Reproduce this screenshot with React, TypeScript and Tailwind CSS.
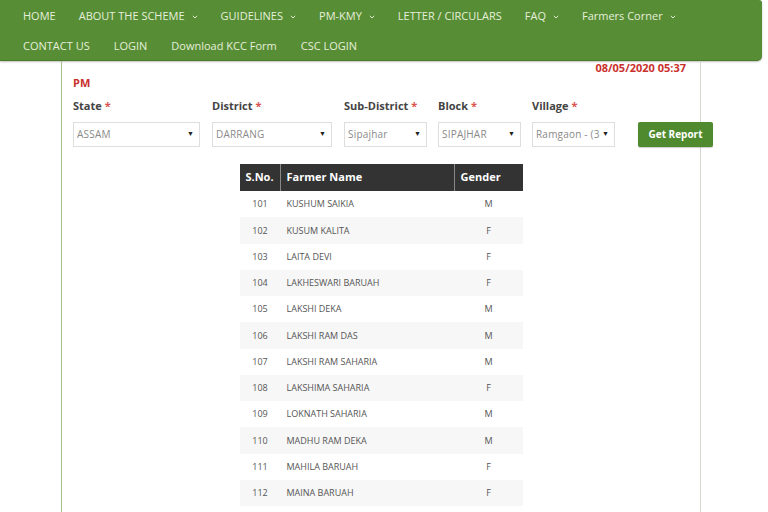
import React from "react";

const Chev = () => (
  <svg width="6" height="4" viewBox="0 0 6 4" className="ml-[7px] inline-block">
    <path d="M0.8 0.8 L3 3 L5.2 0.8" stroke="#dfe9d2" strokeWidth="1" fill="none" />
  </svg>
);

const row1: [string, boolean][] = [
  ["HOME", false],
  ["ABOUT THE SCHEME", true],
  ["GUIDELINES", true],
  ["PM-KMY", true],
  ["LETTER / CIRCULARS", false],
  ["FAQ", true],
  ["Farmers Corner", true],
];
const row2 = ["CONTACT US", "LOGIN", "Download KCC Form", "CSC LOGIN"];

const rows: [string, string, string][] = [
  ["101", "KUSHUM SAIKIA", "M"],
  ["102", "KUSUM KALITA", "F"],
  ["103", "LAITA DEVI", "F"],
  ["104", "LAKHESWARI BARUAH", "F"],
  ["105", "LAKSHI DEKA", "M"],
  ["106", "LAKSHI RAM DAS", "M"],
  ["107", "LAKSHI RAM SAHARIA", "M"],
  ["108", "LAKSHIMA SAHARIA", "F"],
  ["109", "LOKNATH SAHARIA", "M"],
  ["110", "MADHU RAM DEKA", "M"],
  ["111", "MAHILA BARUAH", "F"],
  ["112", "MAINA BARUAH", "F"],
];

const Field = ({ label, value, w, ml }: { label: string; value: string; w: string; ml: string }) => (
  <div className={`flex flex-col shrink-0 ${w} ${ml}`}>
    <div className="h-[14px] leading-[14px] text-[11px] font-bold text-[#444] whitespace-nowrap">
      {label} <span className="text-[#d9534f]">*</span>
    </div>
    <div className="mt-[9px] h-[25px] border border-[#dedede] bg-white flex items-center pl-[3px] pr-[5px] text-[10px] text-[#8a8a8a]">
      <span className="flex-1 truncate tracking-[0.2px]">{value}</span>
      <span className="text-[7px] text-[#222]">▼</span>
    </div>
  </div>
);

export default function App() {
  return (
    <div className="w-[768px] h-[512px] overflow-hidden bg-white" style={{ fontFamily: '"Open Sans", "Liberation Sans", sans-serif' }}>
      <nav className="w-[762px] h-[61px] bg-[#578d35] rounded-br-[5px] rounded-tr-[3px] border-b border-[#4a7a2c] shadow-[0_1px_2px_rgba(0,0,0,0.25)] pl-[23px] text-[11px] text-[#e6efdb]">
        <div className="h-[32px] flex items-center gap-[23px] pt-[1px]">
          {row1.map(([t, c]) => (
            <span key={t} className="flex items-center whitespace-nowrap">
              {t}
              {c && <Chev />}
            </span>
          ))}
        </div>
        <div className="h-[28px] flex items-center gap-[24px]">
          {row2.map((t) => (
            <span key={t} className="whitespace-nowrap">{t}</span>
          ))}
        </div>
      </nav>
      <div className="ml-[61px] w-[640px] h-[451px] border-l border-l-[#a6c08f] border-r border-r-[#d4d8cf]">
        <div className="h-[14px] leading-[14px] text-right pr-[14px] text-[11px] font-bold text-[#c9302c]">
          08/05/2020 05:37
        </div>
        <div className="pl-[11px]">
          <div className="h-[16px] leading-[16px] text-[11px] font-bold text-[#c9302c]">PM</div>
          <div className="mt-[8px] flex items-end">
            <Field label="State" value="ASSAM" w="w-[127px]" ml="" />
            <Field label="District" value="DARRANG" w="w-[120px]" ml="ml-[12px]" />
            <Field label="Sub-District" value="Sipajhar" w="w-[83px]" ml="ml-[12px]" />
            <Field label="Block" value="SIPAJHAR" w="w-[83px]" ml="ml-[11px]" />
            <Field label="Village" value="Ramgaon - (3" w="w-[83px]" ml="ml-[11px]" />
            <button className="shrink-0 ml-[23px] w-[75px] h-[25px] bg-[#4f8a2e] rounded-[2px] text-white text-[10px] font-bold shadow-[0_1px_1px_rgba(0,0,0,0.2)]">
              Get Report
            </button>
          </div>
        </div>
        <div className="mt-[17px] mx-auto w-[283px]">
          <div className="h-[27px] bg-[#333333] flex text-white text-[11px] font-bold">
            <div className="w-[41px] flex items-center justify-center border-r border-[#888]">S.No.</div>
            <div className="w-[174px] flex items-center pl-[6px] border-r border-[#888]">Farmer Name</div>
            <div className="flex-1 flex items-center pl-[6px]">Gender</div>
          </div>
          {rows.map(([n, name, g], i) => (
            <div
              key={n}
              className={`h-[26.25px] flex items-center text-[9px] text-[#555] ${i % 2 === 1 ? "bg-[#f7f7f7]" : "bg-white"}`}
            >
              <div className="w-[41px] text-center">{n}</div>
              <div className="w-[174px] pl-[6px]">{name}</div>
              <div className="flex-1 text-center">{g}</div>
            </div>
          ))}
        </div>
      </div>
    </div>
  );
}
